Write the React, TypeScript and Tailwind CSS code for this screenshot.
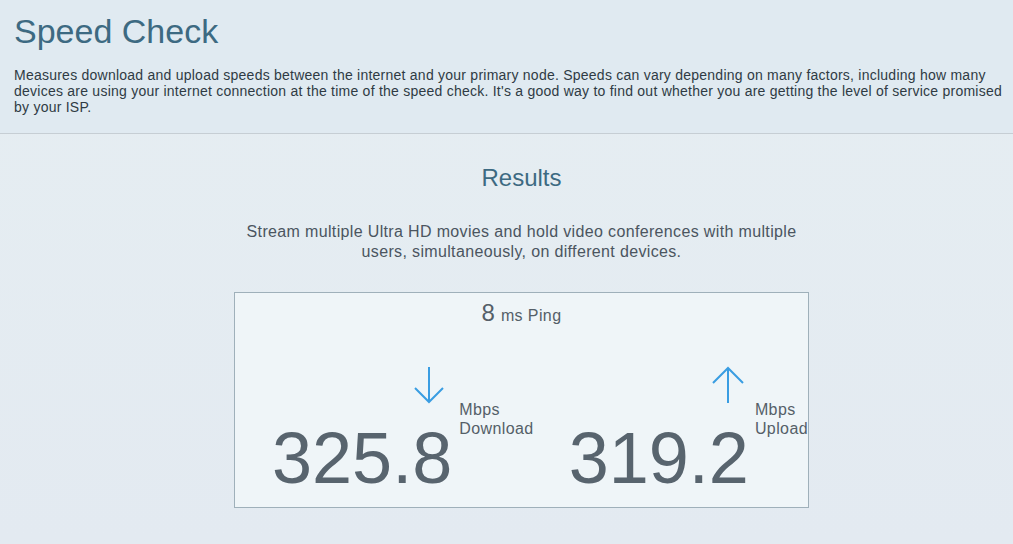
import React from 'react';

const font = { fontFamily: '"Liberation Sans", Arial, sans-serif' };

const ArrowDown = () => (
    <svg width="32" height="38" viewBox="0 0 32 38" fill="none" stroke="#3a9de2" strokeWidth="2">
        <line x1="16" y1="1" x2="16" y2="36" />
        <polyline points="2,22 16,36 30,22" />
    </svg>
);

const ArrowUp = () => (
    <svg width="32" height="38" viewBox="0 0 32 38" fill="none" stroke="#3a9de2" strokeWidth="2">
        <line x1="16" y1="2" x2="16" y2="37" />
        <polyline points="1,17 16,2 31,17" />
    </svg>
);

type SpeedProps = {
    value: string;
    label: string;
    up?: boolean;
};

const Speed = ({ value, label, up }: SpeedProps) => (
    <div className="flex">
        <div className="flex flex-col items-end">
            <div className={up ? 'mr-[5px]' : 'mr-[7px]'}>{up ? <ArrowUp /> : <ArrowDown />}</div>
            <div className="mt-[18px] text-[72px] leading-none text-[#58646e]">{value}</div>
        </div>
        <div
            className={`flex flex-col pt-[34px] text-[16px] leading-[19px] tracking-[0.4px] text-[#555f68] ${
                up ? 'ml-[6px]' : 'ml-[7px]'
            }`}
        >
            <span>Mbps</span>
            <span>{label}</span>
        </div>
    </div>
);

export default function App() {
    return (
        <div className="min-h-[544px] w-full bg-gradient-to-b from-[#e6eef2] to-[#e3eaf1]" style={font}>
            <div className="border-b border-[#c6ced4] bg-[#e0eaf1] pl-[14px] pr-[2px] pt-[11px] pb-[18px]">
                <h1 className="text-[34px] leading-[40px] text-[#3d6a82]">Speed Check</h1>
                <p className="mt-[16px] whitespace-nowrap text-[14px] leading-[16px] tracking-[0.24px] text-[#2f3b44]">
                    Measures download and upload speeds between the internet and your primary node. Speeds can vary
                    depending on many factors, including how many
                    <br />
                    devices are using your internet connection at the time of the speed check. It's a good way to find
                    out whether you are getting the level of service promised
                    <br />
                    by your ISP.
                </p>
            </div>

            <div className="flex flex-col items-center pl-[30px] pt-[30px] pb-[36px]">
                <h2 className="text-[24px] leading-[28px] text-[#3d6a82]">Results</h2>
                <p className="mt-[30px] max-w-[570px] text-center text-[16px] leading-[20px] tracking-[0.35px] text-[#4b5560]">
                    Stream multiple Ultra HD movies and hold video conferences with multiple users, simultaneously,
                    on different devices.
                </p>

                <div className="mt-[30px] h-[216px] w-[575px] border border-[#9fb0ba] bg-[#eff5f8]">
                    <div className="flex items-baseline justify-center pt-[8px] text-[#555f68]">
                        <span className="text-[24px] leading-none">8</span>
                        <span className="ml-[6px] text-[16px] leading-none tracking-[0.4px]">ms Ping</span>
                    </div>
                    <div className="mt-[41px] flex pl-[37px]">
                        <div className="w-[298px]">
                            <Speed value="325.8" label="Download" />
                        </div>
                        <Speed value="319.2" label="Upload" up />
                    </div>
                </div>
            </div>
        </div>
    );
}
